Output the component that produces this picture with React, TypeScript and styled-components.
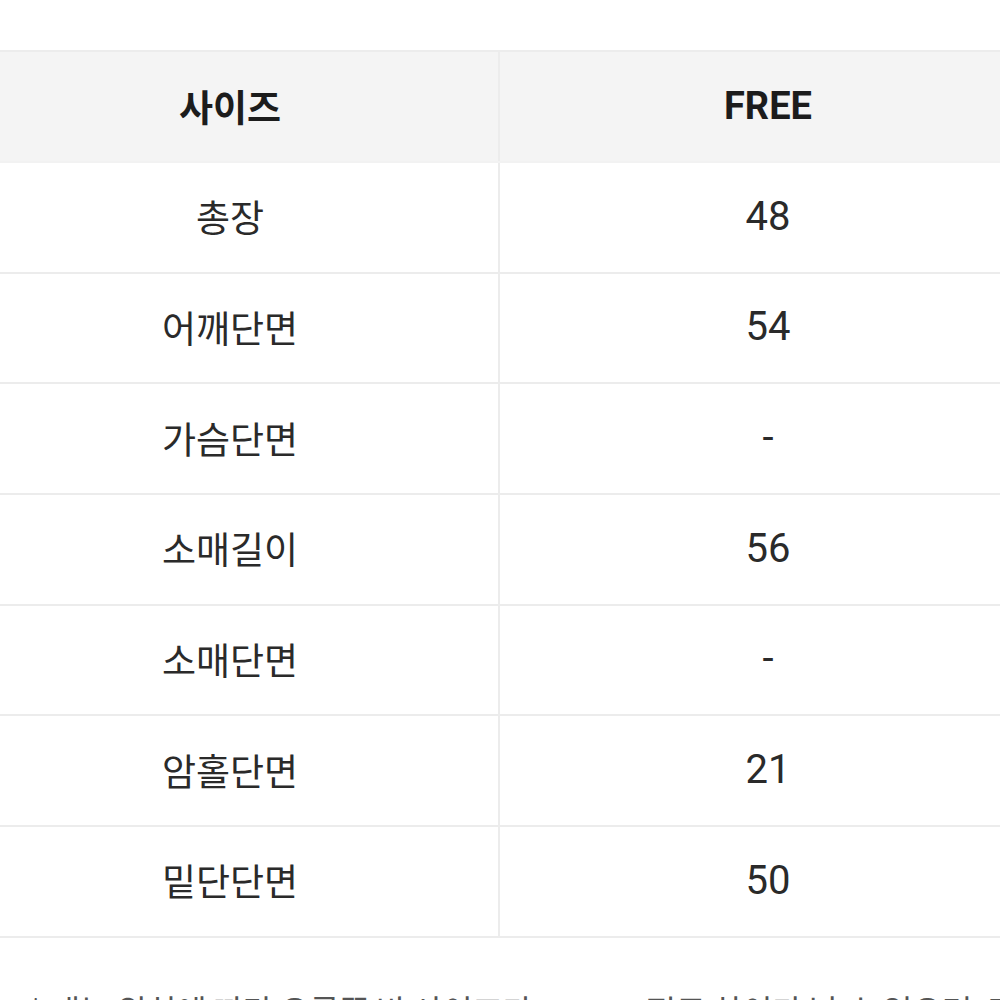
import React from "react";
import styled, { createGlobalStyle } from "styled-components";

const Global = createGlobalStyle`
  html, body {
    margin: 0;
    padding: 0;
    background: #ffffff;
    overflow: hidden;
  }
  body {
    font-family: "Noto Sans CJK KR", "Noto Sans", sans-serif;
  }
`;

const Page = styled.div`
  width: 1000px;
  height: 1000px;
  overflow: hidden;
  padding-top: 50px;
  box-sizing: border-box;
`;

const Table = styled.div`
  width: 1074px;
  margin-left: -38px;
  border-top: 2px solid #ececec;
  display: flex;
  flex-direction: column;
`;

const Row = styled.div<{ $head?: boolean }>`
  display: grid;
  grid-template-columns: 536px 538px;
  height: ${(p) => (p.$head ? "111px" : "110.67px")};
  box-sizing: border-box;
  background: ${(p) => (p.$head ? "#f4f4f4" : "#ffffff")};
  border-bottom: 2px solid ${(p) => (p.$head ? "#f2f2f2" : "#ececec")};
`;

const Cell = styled.div<{ $value?: boolean; $head?: boolean }>`
  display: flex;
  align-items: center;
  justify-content: center;
  box-sizing: border-box;
  border-left: ${(p) => (p.$value ? "2px solid #ececec" : "none")};
  color: ${(p) => (p.$head ? "#1c1c1c" : "#2a2a2a")};
  font-weight: ${(p) => (p.$head ? 700 : 400)};
  font-family: ${(p) =>
    p.$value
      ? `Roboto, "Liberation Sans", sans-serif`
      : `"Noto Sans CJK KR", "Noto Sans", sans-serif`};
  font-size: ${(p) => (p.$value ? (p.$head ? "38px" : "40px") : "37px")};
  letter-spacing: 0;
  padding-bottom: 2px;
`;

const Note = styled.p`
  margin: 48px 0 0 28px;
  white-space: nowrap;
  color: #555555;
  font-size: 33px;
  line-height: 1.5;
  font-family: "Noto Sans CJK KR", "Noto Sans", sans-serif;
  letter-spacing: -0.5px;
`;

const rows: [string, string][] = [
  ["총장", "48"],
  ["어깨단면", "54"],
  ["가슴단면", "-"],
  ["소매길이", "56"],
  ["소매단면", "-"],
  ["암홀단면", "21"],
  ["밑단단면", "50"],
];

export default function App() {
  return (
    <>
      <Global />
      <Page>
        <Table>
          <Row $head>
            <Cell $head>사이즈</Cell>
            <Cell $head $value>
              FREE
            </Cell>
          </Row>
          {rows.map(([label, value]) => (
            <Row key={label}>
              <Cell>{label}</Cell>
              <Cell $value>{value}</Cell>
            </Row>
          ))}
        </Table>
        <Note>
          * 재는 위치에 따라 오른쪽 반 사이즈가 1~3cm 정도 차이가 날 수 있으며, 다른 경우
        </Note>
      </Page>
    </>
  );
}
